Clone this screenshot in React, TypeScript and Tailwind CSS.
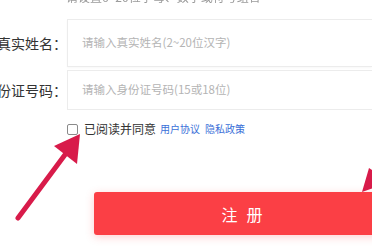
import React from "react";

export default function App() {
  const font = "font-['Noto_Sans_CJK_SC','Noto_Sans',sans-serif]";
  return (
    <div className={`relative w-[372px] h-[248px] overflow-hidden bg-white ${font}`}>
      <div className="h-[18px] pl-[66px] overflow-hidden">
        <div className="-mt-[9px] text-[12px] leading-[12px] text-[#9a9a9a] blur-[0.4px]">
          请设置6~20位字母、数字或符号组合
        </div>
      </div>
      <div className="flex items-center h-[50px]">
        <div className="w-[67px] shrink-0 text-[14px] text-[#333] whitespace-nowrap flex justify-end">
          <span>真实姓名：</span>
        </div>
        <div className="flex-1 h-[48px] border border-r-0 border-[#ececec] flex items-center pl-[14px] text-[11.5px] text-[#b4b4b4] shadow-[0_1px_2px_rgba(0,0,0,0.03)]">
          请输入真实姓名(2~20位汉字)
        </div>
      </div>
      <div className="flex items-center h-[42px] mt-[1px]">
        <div className="w-[67px] shrink-0 text-[14px] text-[#333] whitespace-nowrap flex justify-end">
          <span>身份证号码：</span>
        </div>
        <div className="flex-1 h-[40px] border border-r-0 border-[#ececec] flex items-center pl-[14px] text-[11.5px] text-[#b4b4b4]">
          请输入身份证号码(15或18位)
        </div>
      </div>
      <div className="flex items-center h-[14px] mt-[11px] pl-[67px]">
        <div className="w-[11px] h-[11px] border border-[#8a8a8a] rounded-[2px] bg-white" />
        <span className="ml-[6px] text-[12px] text-[#333] leading-none">已阅读并同意</span>
        <span className="ml-[4px] text-[10px] text-[#3a6fd8] leading-none">用户协议</span>
        <span className="ml-[5px] text-[10px] text-[#3a6fd8] leading-none">隐私政策</span>
      </div>
      <div className="mt-[56px] ml-[94px] w-[296px] h-[43px] rounded-[3px] bg-[#fb3f45] shadow-[0_2px_8px_rgba(251,63,69,0.25)] flex items-center justify-center text-white text-[16px] tracking-[9px] pl-[9px]">
        注册
      </div>
      <svg className="absolute left-0 top-0 pointer-events-none" width="372" height="248" viewBox="0 0 372 248">
        <line x1="18" y1="218" x2="70" y2="148" stroke="#d81b4a" strokeWidth="5" strokeLinecap="round" />
        <polygon points="80,134 54,146 77,164" fill="#d81b4a" />
        <polygon points="362,192 369,168 390,182" fill="#d81b4a" />
      </svg>
    </div>
  );
}
